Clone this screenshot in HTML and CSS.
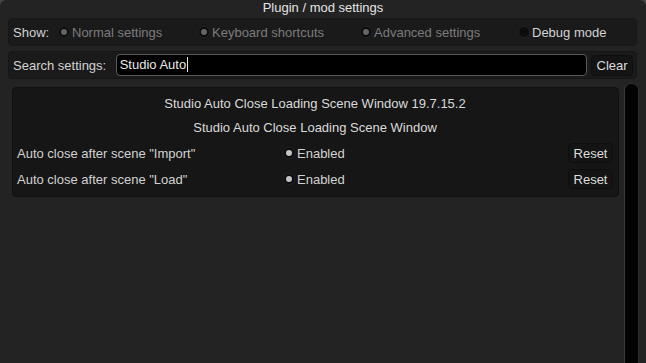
FILE: index.html
```html
<!DOCTYPE html>
<html lang="en">
<head>
  <meta charset="UTF-8" />
  <title>Plugin / mod settings</title>
  <link rel="stylesheet" href="styles.css">
</head>
<body>

  <div class="window">
    <!-- Title bar -->
    <div class="title">Plugin / mod settings</div>

    <!-- Show filter -->
    <div class="bar">
      <div class="show-label">Show:</div>
      <div class="toggle disabled on w-normal"><span class="dot"></span>Normal settings</div>
      <div class="toggle disabled on w-keys"><span class="dot"></span>Keyboard shortcuts</div>
      <div class="toggle disabled on w-adv"><span class="dot"></span>Advanced settings</div>
      <div class="toggle"><span class="dot"></span>Debug mode</div>
    </div>

    <!-- Search -->
    <div class="bar search">
      <div class="search-label">Search settings:</div>
      <div class="field">Studio Auto<span class="caret"></span></div>
      <button class="btn clear">Clear</button>
    </div>

    <div class="content">
      <div class="panel">
        <div class="row center first">Studio Auto Close Loading Scene Window 19.7.15.2</div>
        <div class="row center">Studio Auto Close Loading Scene Window</div>
        <div class="row">
          <div class="setting-name">Auto close after scene "Import"</div>
          <div class="toggle on value"><span class="dot"></span>Enabled</div>
          <button class="btn reset">Reset</button>
        </div>
        <div class="row">
          <div class="setting-name">Auto close after scene "Load"</div>
          <div class="toggle on value"><span class="dot"></span>Enabled</div>
          <button class="btn reset">Reset</button>
        </div>
      </div>
      <div class="scrollbar"></div>
    </div>
  </div>

</body>
</html>
```

FILE: styles.css
```css
* { box-sizing: border-box; }

body {
  margin: 0;
  background: #4a4a4a;
  font-family: 'Liberation Sans', Arial, sans-serif;
  font-size: 13px;
  color: #d2d2d2;
}

.window {
  width: 646px;
  height: 363px;
  background: #232323;
  border-radius: 6px 6px 0 0;
  overflow: hidden;
}

.title {
  height: 17px;
  line-height: 16px;
  text-align: center;
  color: #e4e4e4;
}

.bar {
  display: flex;
  align-items: center;
  height: 28px;
  margin: 1px 9px 0 8px;
  padding: 0 3px 0 4px;
  background: #1a1a1a;
  border: 1px solid #161616;
  border-radius: 4px;
}

.bar.search {
  margin-top: 5px;
}

.show-label { width: 45px; }
.search-label { width: 103px; }

.toggle {
  display: flex;
  align-items: center;
  white-space: nowrap;
}

.toggle .dot {
  width: 12px;
  height: 12px;
  margin-right: 2px;
  border-radius: 50%;
  background: #0c0c0c;
  border: 1px solid #222;
  position: relative;
}

.toggle.on .dot::after {
  content: "";
  position: absolute;
  left: 2px;
  top: 2px;
  width: 6px;
  height: 6px;
  border-radius: 50%;
  background: #c4c4c4;
}

.toggle.disabled { color: #7c7c7c; }
.toggle.disabled.on .dot::after { background: #666; }

.w-normal { width: 140px; }
.w-keys { width: 162px; }
.w-adv { width: 158px; }

.field {
  width: 473px;
  height: 22px;
  line-height: 20px;
  padding: 0 3px;
  background: #000;
  border: 1px solid #5a5a5a;
  border-radius: 4px;
  color: #e8e8e8;
}

.caret {
  display: inline-block;
  width: 1px;
  height: 15px;
  margin-left: 1px;
  vertical-align: -3px;
  background: #e8e8e8;
}

.btn {
  font: inherit;
  color: #dcdcdc;
  background: #141414;
  border: 1px solid #0e0e0e;
  border-radius: 4px;
  padding: 0;
  height: 21px;
}

.btn.clear {
  width: 42px;
  margin-left: 4px;
}

.content {
  display: flex;
  align-items: flex-start;
  margin-top: 4px;
}

.panel {
  width: 607px;
  margin: 4px 0 0 12px;
  padding: 4px 5px 6px 4px;
  background: #161616;
  border: 1px solid #101010;
  border-radius: 4px;
  display: flex;
  flex-direction: column;
  gap: 4px;
}

.row {
  height: 22px;
  display: flex;
  align-items: center;
}

.row.center {
  justify-content: center;
  color: #dadada;
}

.row.first {
  margin-bottom: -2px;
}

.setting-name { width: 266px; }

.value { flex: 1; }

.btn.reset {
  width: 45px;
  height: 20px;
}

.scrollbar {
  width: 15px;
  height: 290px;
  margin-left: 5px;
  background: #030303;
  border: 1px solid #2e2e2e;
  border-left-color: #3a3a3a;
  border-radius: 7px 7px 0 0;
}
```
